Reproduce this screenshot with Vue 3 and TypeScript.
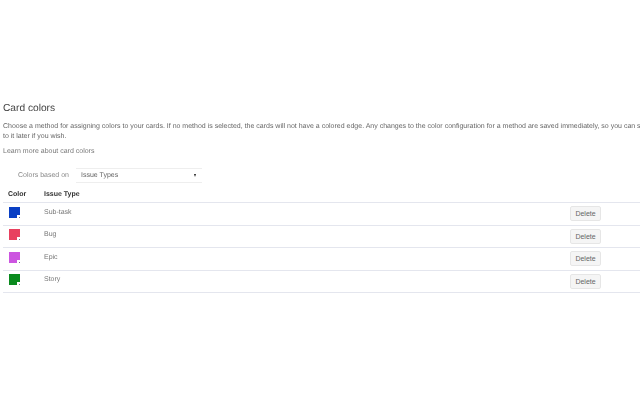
<script setup lang="ts">
const rows = [
  { name: 'Sub-task', color: '#0a3fc4' },
  { name: 'Bug', color: '#e8405f' },
  { name: 'Epic', color: '#cc55e0' },
  { name: 'Story', color: '#0a8a1e' },
]
</script>

<template>
  <main class="page">
    <h2 class="title">Card colors</h2>
    <p class="intro">Choose a method for assigning colors to your cards. If no method is selected, the cards will not have a colored edge. Any changes to the color configuration for a method are saved immediately, so you can switch<br />to it later if you wish.</p>
    <p class="learn">Learn more about card colors</p>
    <div class="method">
      <span class="method-label">Colors based on</span>
      <div class="select"><span>Issue Types</span><i class="caret"></i></div>
    </div>
    <div class="head">
      <span class="col-color">Color</span>
      <span>Issue Type</span>
    </div>
    <div v-for="row in rows" :key="row.name" class="row">
      <div class="col-color">
        <div class="swatch" :style="{ background: row.color }"><i class="corner"></i></div>
      </div>
      <span class="name">{{ row.name }}</span>
      <button class="del" type="button">Delete</button>
    </div>
  </main>
</template>

<style scoped>
.page {
  width: 640px;
  height: 400px;
  box-sizing: border-box;
  padding-top: 102px;
  overflow: hidden;
  font-family: "Liberation Sans", Arial, sans-serif;
  color: #444;
  font-size: 7px;
  will-change: opacity;
  text-rendering: geometricPrecision;
}
.title {
  margin: 0 0 6px 3px;
  font-size: 10.2px;
  line-height: 14px;
  font-weight: 400;
  color: #444;
}
.intro {
  margin: 0 0 5px 3px;
  width: 800px;
  line-height: 10px;
  color: #666;
}
.learn {
  margin: 0 0 11px 3px;
  line-height: 10px;
  color: #777;
}
.method {
  display: flex;
  align-items: center;
  height: 15px;
  margin-bottom: 3px;
}
.method-label {
  margin-left: 18px;
  width: 58px;
  flex: none;
  white-space: nowrap;
  color: #888;
}
.select {
  box-sizing: border-box;
  width: 126px;
  height: 15px;
  display: flex;
  align-items: center;
  justify-content: space-between;
  padding: 0 6px 0 5px;
  border-top: 1px solid #eee;
  border-bottom: 1px solid #eee;
  color: #666;
}
.caret {
  width: 0;
  height: 0;
  border-left: 1.5px solid transparent;
  border-right: 1.5px solid transparent;
  border-top: 3px solid #222;
}
.head {
  display: flex;
  align-items: center;
  height: 16px;
  font-weight: 700;
  color: #333;
}
.col-color {
  margin-left: 8px;
  width: 36px;
  flex: none;
}
.row {
  display: flex;
  align-items: center;
  height: 21.5px;
  margin-left: 3px;
  border-top: 1px solid #e4e6ee;
  position: relative;
}
.row:last-of-type {
  border-bottom: 1px solid #e4e6ee;
}
.row .col-color {
  margin-left: 6px;
  width: 35px;
  padding-bottom: 3px;
}
.name {
  color: #777;
  margin-top: -3px;
}
.swatch {
  position: relative;
  width: 11px;
  height: 11px;
}
.corner {
  position: absolute;
  right: 0;
  bottom: 0;
  width: 3px;
  height: 3px;
  background: #fff;
}
.corner::after {
  content: "";
  position: absolute;
  right: 0;
  bottom: 0;
  width: 1px;
  height: 1px;
  background: #778;
}
.del {
  position: absolute;
  left: 567px;
  top: 3px;
  width: 31px;
  height: 15px;
  padding: 0;
  border: 1px solid #e6e6e6;
  border-radius: 2px;
  background: #f5f5f5;
  font: 7px "Liberation Sans", Arial, sans-serif;
  color: #666;
}
</style>
